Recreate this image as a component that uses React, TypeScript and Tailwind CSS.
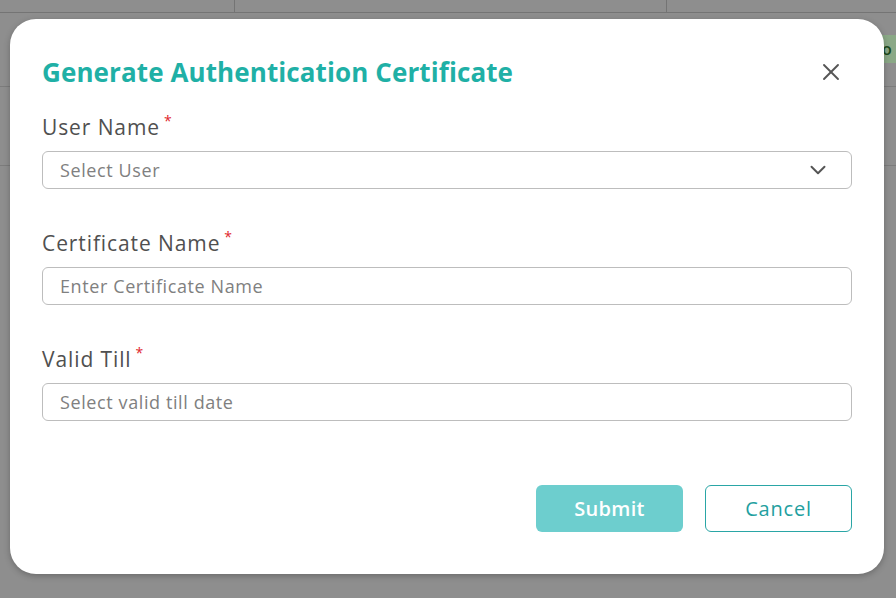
import React from "react"
import { ChevronDown, X } from "lucide-react"

const fields = [
  { label: "User Name", placeholder: "Select User", select: true },
  { label: "Certificate Name", placeholder: "Enter Certificate Name" },
  { label: "Valid Till", placeholder: "Select valid till date" },
]

function Field({ label, placeholder, select }: { label: string; placeholder: string; select?: boolean }) {
  return (
    <div className="flex flex-col">
      <label className="flex items-start text-[21px] leading-[26px] tracking-[0.9px] text-[#505050] font-medium">
        {label}
        <span className="ml-[4px] -mt-[6px] text-[14px] text-[#e0262b]">*</span>
      </label>
      <div className="mt-[11px] h-[38px] flex items-center justify-between rounded-[6px] border border-[#bdbdbd] pl-[17px] pr-[20px]">
        <span className="text-[18px] tracking-[0.6px] text-[#808080]">{placeholder}</span>
        {select && <ChevronDown className="w-[26px] h-[26px] text-[#555]" strokeWidth={1.8} />}
      </div>
    </div>
  )
}

export default function App() {
  return (
    <div
      className="relative w-[896px] h-[598px] overflow-hidden bg-[#8e8e8e]"
      style={{ fontFamily: '"Open Sans", "Liberation Sans", sans-serif' }}
    >
      {/* table behind overlay */}
      <div className="flex flex-col">
        <div className="flex h-[13px] border-b border-[#747474]">
          <div className="w-[235px] border-r border-[#747474]" />
          <div className="w-[432px] border-r border-[#747474]" />
          <div className="flex-1" />
        </div>
        <div className="flex h-[74px] border-b border-[#7c7c7c] items-start justify-end pt-[22px]">
          <span className="h-[28px] w-[16px] bg-[#8aa886] text-[#1d4a1d] text-[16px] font-semibold leading-[28px] pl-[2px]">o</span>
        </div>
        <div className="h-[79px] border-b border-[#7c7c7c]" />
      </div>

      {/* modal */}
      <div className="absolute left-[10px] top-[19px] w-[874px] h-[555px] rounded-[26px] bg-white shadow-[0_2px_6px_rgba(0,0,0,0.25)] px-[32px] pt-[34px]">
        <div className="flex items-center justify-between">
          <h2 className="text-[26px] leading-[38px] font-bold text-[#1fb0a6] tracking-[0.1px]">
            Generate Authentication Certificate
          </h2>
          <button className="mr-[7px] text-[#555]">
            <X className="w-[28px] h-[28px]" strokeWidth={1.6} />
          </button>
        </div>
        <div className="mt-[23px] flex flex-col gap-[41px]">
          {fields.map((f) => (
            <Field key={f.label} {...f} />
          ))}
        </div>
        <div className="mt-[64px] flex justify-end gap-[22px]">
          <button className="w-[147px] h-[47px] rounded-[6px] bg-[#6dcece] text-white text-[20px] font-semibold tracking-[0.3px]">
            Submit
          </button>
          <button className="w-[147px] h-[47px] rounded-[6px] border border-[#2aa6a6] text-[#239f9f] text-[20px] font-medium tracking-[0.8px]">
            Cancel
          </button>
        </div>
      </div>
    </div>
  )
}
